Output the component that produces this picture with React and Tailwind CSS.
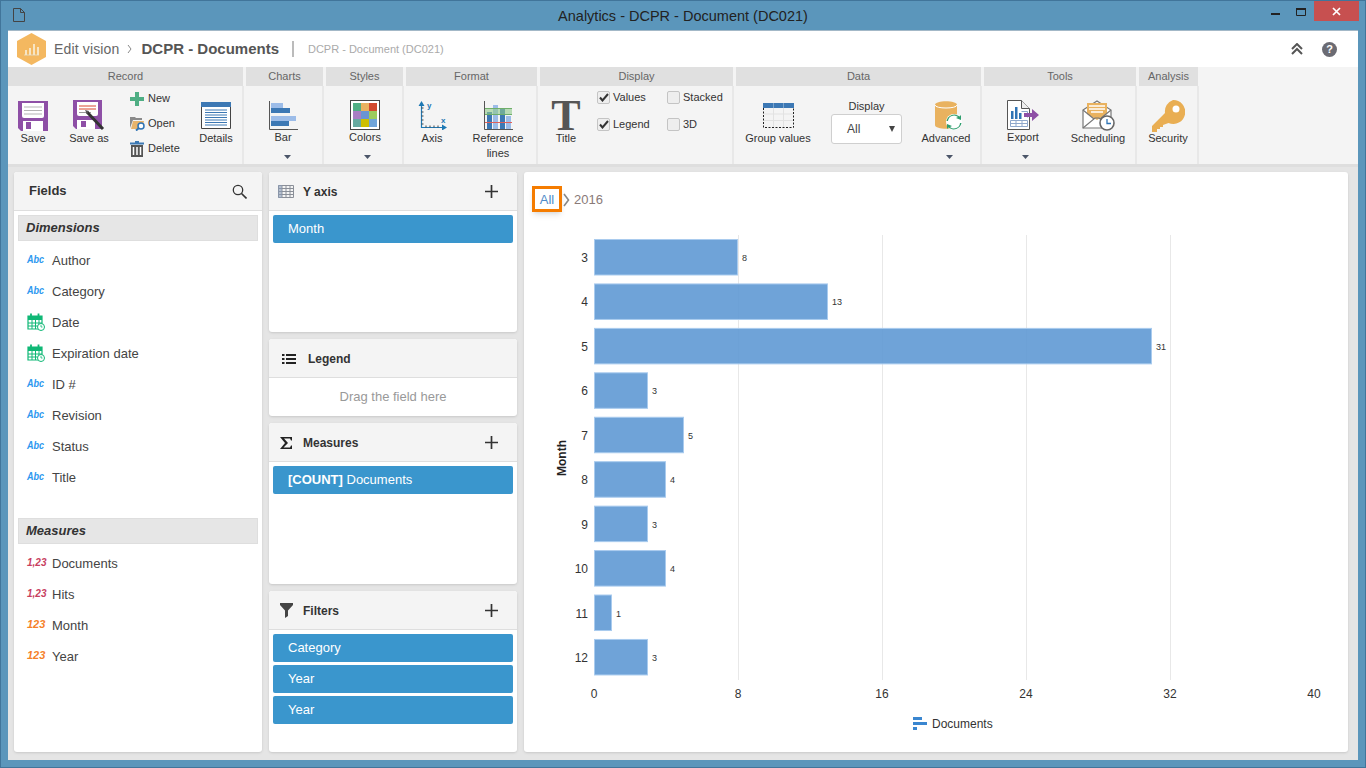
const font = { fontFamily: '"Liberation Sans", Arial, sans-serif' }

const Caret = ({ shift }) => (
    <svg width="7" height="4" viewBox="0 0 7 4" className={`mt-auto mb-[5px] shrink-0 ${shift}`}><path d="M0 0h7L3.5 4z" fill="#4b5568" /></svg>
)

// 리본 버튼
const Tool = ({ w, label, caret, up, children }) => (
    <div className={`${w} h-full flex flex-col items-center shrink-0`}>
        <div className={`${up ? 'h-[30px]' : 'h-[31px]'} mt-[14px] flex items-center justify-center shrink-0`}>{children}</div>
        <div className="text-[11px] leading-[15px] text-center text-[#333] whitespace-pre-line">{label}</div>
        {caret && <Caret shift={caret} />}
    </div>
)

const Group = ({ w, title, children }) => (
    <div className={`${w} flex flex-col shrink-0`}>
        <div className="h-[19px] mr-[3px] bg-[#e0e0e0] text-[11px] leading-[19px] text-center text-[#666]">{title}</div>
        <div className="h-[78px] mr-[2px] border-r-[2px] border-[#e8e8e8] flex">{children}</div>
    </div>
)

const SaveIcon = () => (
    <svg width="30" height="30" viewBox="0 0 30 30">
        <path d="M0 0h30v30H3l-3-3z" fill="#8e4fa6" />
        <path d="M4 2h22v13a2 2 0 0 1-2 2H6a2 2 0 0 1-2-2z" fill="#fff" />
        <path d="M6 6h18M6 9.5h18M6 13h18" stroke="#b5b5b5" />
        <path d="M5 20h20v10H5z" fill="#fff" />
        <path d="M8 21h5v7H8z" fill="#8e4fa6" />
    </svg>
)

const SaveAsIcon = () => (
    <svg width="32" height="31" viewBox="0 0 32 31">
        <path d="M0 0h29v29H3l-3-3z" fill="#8e4fa6" />
        <path d="M4 2h21v12a2 2 0 0 1-2 2H6a2 2 0 0 1-2-2z" fill="#fff" />
        <path d="M6 6h17M6 9h17" stroke="#d9472f" />
        <path d="M6 12.500h12" stroke="#999" />
        <path d="M4 20h18v9H4z" fill="#fff" />
        <path d="M8 21h5v6H8z" fill="#8e4fa6" />
        <path d="M14 12l16 17" stroke="#333" strokeWidth="3" />
        <path d="M12 10l4 1-2 3z" fill="#555" />
    </svg>
)

const NewIcon = () => (
    <svg width="14" height="14" viewBox="0 0 14 14"><path d="M5 0h4v5h5v4H9v5H5V9H0V5h5z" fill="#4fae84" /></svg>
)

const OpenIcon = () => (
    <svg width="16" height="15" viewBox="0 0 16 15">
        <path d="M0 1h5l1 1h6v2H3l-3 8z" fill="#8a8a8a" />
        <path d="M1 13l2-8h11l-2 8z" fill="#e8b46c" />
        <circle cx="11" cy="10" r="3" fill="#fff" stroke="#2f74b5" strokeWidth="1.500" />
        <path d="M9 12l-3 2.500" stroke="#2f74b5" strokeWidth="2" />
    </svg>
)

const DeleteIcon = () => (
    <svg width="14" height="16" viewBox="0 0 14 16">
        <path d="M0 1.500h14v2H0z" fill="#3c79b4" />
        <path d="M5 0h4v2H5z" fill="#3c79b4" />
        <path d="M1 4h12v12H1z" fill="#555" />
        <path d="M3.500 6v8M7 6v8M10.500 6v8" stroke="#fff" strokeWidth="1.500" />
    </svg>
)

const DetailsIcon = () => (
    <svg width="30" height="27" viewBox="0 0 30 27">
        <path d="M.5.500h29v26H.5z" fill="#fff" stroke="#444" />
        <path d="M0 0h30v5H0z" fill="#3c78b4" />
        <path d="M4 8h22M4 10.500h22M4 13h22M4 15.500h22M4 18h22M4 20.500h22M4 23h22" stroke="#3c78b4" />
    </svg>
)

const BarIcon = () => (
    <svg width="29" height="29" viewBox="0 0 29 29">
        <path d="M.5 0v28.500H29" fill="none" stroke="#555" />
        <path d="M2 2h12v5H2z" fill="#9cbce8" />
        <path d="M2 7h19v5H2z" fill="#3c78b4" />
        <path d="M2 15h25v5H2z" fill="#9cbce8" />
        <path d="M2 20h18v5H2z" fill="#3c78b4" />
    </svg>
)

const ColorsIcon = () => {
    const cells = ['#4fae84', '#e9b25f', '#d2492f', '#a77fc4', '#6a94d4', '#9ccb5e', '#66aaa0', '#cdbf00', '#6fa4d9']
    return (
        <div className="w-[30px] h-[30px] border border-[#444] bg-white p-[2px] grid grid-cols-3">
            {cells.map((c, i) => <div key={i} style={{ backgroundColor: c }} />)}
        </div>
    )
}

const AxisIcon = () => (
    <svg width="29" height="29" viewBox="0 0 29 29">
        <path d="M3.500 3v23.500H27" fill="none" stroke="#1e78b4" strokeWidth="1.200" />
        <path d="M3.500 0l3 5h-6zM29 26.500l-5-3v6z" fill="#1e78b4" />
        <path d="M3.500 7h2M3.500 11h2M3.500 15h2M3.500 19h2M3.500 23h2M8 24.500v2M12 24.500v2M16 24.500v2M20 24.500v2" stroke="#444" />
        <text x="9" y="7" fontSize="8" fontWeight="700" fill="#1e78b4">y</text>
        <text x="23" y="22" fontSize="8" fontWeight="700" fill="#1e78b4">x</text>
    </svg>
)

const RefIcon = () => (
    <svg width="29" height="29" viewBox="0 0 29 29">
        <path d="M.5 0v28.500H29" fill="none" stroke="#555" />
        <path d="M3 11h5v17H3zM16 8h5v20h-5z" fill="#3c78b4" />
        <path d="M9 4h5v24H9zM22 15h5v13h-5z" fill="#9cbce8" />
        <path d="M1 7h27v7H1z" fill="#8fc98a" fillOpacity=".6" />
        <path d="M1 7.500h27M1 13.500h27" stroke="#6fae6a" />
        <path d="M1 21.500h27" stroke="#e0605a" />
    </svg>
)

const GroupIcon = () => (
    <svg width="31" height="25" viewBox="0 0 31 25">
        <path d="M10.500 5v19M20.500 5v19M1 11h29M1 17.500h29" stroke="#e2e2e2" />
        <path d="M.5 5v19.500h30V5" fill="none" stroke="#222" strokeDasharray="2 1.500" />
        <path d="M0 0h31v5H0z" fill="#3c78b4" />
        <path d="M10.500 0v5M20.500 0v5" stroke="#7aa3cc" />
    </svg>
)

const AdvancedIcon = () => (
    <svg width="28" height="29" viewBox="0 0 28 29" className="ml-[5px]">
        <path d="M0 4c0-5 22-5 22 0v20c0 5-22 5-22 0z" fill="#e9b25f" />
        <path d="M0 4c0 4 22 4 22 0" fill="none" stroke="#fff" />
        <circle cx="19" cy="21" r="8" fill="#fff" />
        <path d="M13 20a6 6 0 0 1 10-4l-2 1 5 2v-5l-1.500 1.500A8 8 0 0 0 11.500 20zM25 22a6 6 0 0 1-10 4l2-1-5-2v5l1.500-1.500A8 8 0 0 0 26.500 22z" fill="#2e9e6e" />
    </svg>
)

const ExportIcon = () => (
    <svg width="32" height="30" viewBox="0 0 32 30">
        <path d="M.5.500h14l8 8v21H.5z" fill="#fff" stroke="#555" />
        <path d="M14.500.500v8h8" fill="#eee" stroke="#555" />
        <path d="M4 11h2.500v8H4zM8 7h2.500v12H8zM12 13h2.500v6H12z" fill="#2f74b5" />
        <path d="M3.500 20.500h17v6h-17zM3.500 23.500h17M9 20.500v6M15 20.500v6M14.500 11.500h6v6" fill="none" stroke="#8fa8cc" />
        <path d="M17 13h8V9l7 6-7 6v-4h-8z" fill="#8e4fa6" />
    </svg>
)

const ScheduleIcon = () => (
    <svg width="33" height="31" viewBox="0 0 33 31">
        <path d="M1 10L15 1l14 9v18H1z" fill="#fff" stroke="#777" strokeWidth="1.200" />
        <path d="M5 3h20v11l-10 6-10-6z" fill="#e9b25f" />
        <path d="M7 6h16M7 9h16M9 12h12" stroke="#fff" strokeWidth="1.300" />
        <path d="M1 10l11 9M29 10L18 19M1 28l12-10h4l12 10" fill="none" stroke="#777" strokeWidth="1.200" />
        <circle cx="25" cy="23" r="7" fill="#fff" stroke="#666" strokeWidth="1.600" />
        <path d="M25 19v4.500h4" fill="none" stroke="#2f74b5" strokeWidth="1.300" />
    </svg>
)

const KeyIcon = () => (
    <svg width="33" height="32" viewBox="0 0 33 32">
        <path d="M21 0a12 12 0 1 1-4.500 23L11 25v2H8v2H5v3H0v-6L13 13a12 12 0 0 1 8-13z" fill="#e9ae53" />
        <circle cx="24" cy="9" r="3.500" fill="#fff" />
    </svg>
)

const Check = ({ label, on, w }) => (
    <div className={`${w} flex items-center h-[13px]`}>
        <div className="w-[13px] h-[13px] rounded-[2px] border border-[#c4c4c4] bg-[#eeeeee] flex items-center justify-center shrink-0">
            {on && <svg width="10" height="9" viewBox="0 0 10 9"><path d="M1 4.500l2.500 3L9 1" fill="none" stroke="#333" strokeWidth="2" /></svg>}
        </div>
        <span className="ml-[3px] text-[11px] text-[#333]">{label}</span>
    </div>
)

const SmallAction = ({ icon, label }) => (
    <div className="flex items-center h-[25px]">
        <div className="w-[18px] flex justify-start">{icon}</div>
        <span className="text-[11px] text-[#333]">{label}</span>
    </div>
)

const Plus = () => (
    <svg width="13" height="13" viewBox="0 0 13 13" className="ml-auto mr-[19px]"><path d="M6.500 0v13M0 6.500h13" stroke="#333" strokeWidth="1.700" /></svg>
)

const TableIcon = () => (
    <svg width="16" height="13" viewBox="0 0 16 13">
        <path d="M.5.500h15v12H.5zM.5 3.500h15M.5 6.500h15M.5 9.500h15M4 .500v12M8 .500v12M12 .500v12" fill="none" stroke="#8a8f98" />
        <path d="M0 0h4v13H0z" fill="#8a9bb4" fillOpacity=".6" />
    </svg>
)

const ListIcon = () => (
    <svg width="14" height="10" viewBox="0 0 14 10"><path d="M0 1h2.500M4 1h10M0 5h2.500M4 5h10M0 9h2.500M4 9h10" stroke="#222" strokeWidth="1.800" /></svg>
)

const SigmaIcon = () => (
    <svg width="13" height="12" viewBox="0 0 13 12"><path d="M0 0h12v3.500h-1L10 1.500H4L8 6l-4.500 4.500H10l1-2h1V12H0l5-6z" fill="#222" /></svg>
)

const FunnelIcon = () => (
    <svg width="13" height="15" viewBox="0 0 13 15"><path d="M0 0h13v2L8 7.500V13l-3 2V7.500L0 2z" fill="#444" /></svg>
)

const PanelHead = ({ icon, title, plus, textW }) => (
    <div className="h-[39px] pt-[1px] bg-[#f4f4f4] border-b border-[#dedede] flex items-center rounded-t-[3px] shrink-0">
        <div className={`${textW} flex justify-center items-center shrink-0`}>{icon}</div>
        <span className="text-[12px] font-bold text-[#333]">{title}</span>
        {plus && <Plus />}
    </div>
)

const Chip = ({ children }) => (
    <div className="h-[28px] rounded-[2px] bg-[#3a96cd] pl-[15px] text-[13px] leading-[27px] text-white">{children}</div>
)

const TypeTag = ({ type }) => {
    if (type === 'date') {
        return (
            <svg width="18" height="18" viewBox="0 0 18 18">
                <path d="M1 3h14v13H1z" fill="#fff" stroke="#10b876" strokeWidth="1.200" />
                <path d="M1 3h14v4H1z" fill="#10b876" />
                <path d="M4 0.500v4M11.500 0.500v4" stroke="#10b876" strokeWidth="1.800" />
                <path d="M1 10h14M1 13h14M5 7v9M8.500 7v9M12 7v9" stroke="#10b876" />
                <circle cx="14" cy="14" r="3.500" fill="#fff" stroke="#10b876" />
                <path d="M14 12v2h1.500" fill="none" stroke="#10b876" strokeWidth=".8" />
            </svg>
        )
    }
    if (type === 'abc') return <span className="text-[10px] font-bold italic text-[#2b97ef] inline-block origin-left scale-x-90">Abc</span>
    if (type === 'num') return <span className="text-[10px] font-bold italic text-[#c8405f]">1,23</span>
    return <span className="text-[11px] font-bold italic text-[#f5812a]">123</span>
}

const FieldRow = ({ type, label }) => (
    <div className="h-[31px] flex items-center pl-[13px]">
        <div className="w-[25px] flex items-center shrink-0 -mt-[2px]"><TypeTag type={type} /></div>
        <span className="text-[13px] text-[#444]">{label}</span>
    </div>
)

const SectionHead = ({ children }) => (
    <div className="mx-[4px] h-[26px] bg-[#e6e6e6] border border-[#dedede] pl-[7px] text-[13px] leading-[23px] font-bold italic text-[#333]">{children}</div>
)

const dimensions = [
    { type: 'abc', label: 'Author' },
    { type: 'abc', label: 'Category' },
    { type: 'date', label: 'Date' },
    { type: 'date', label: 'Expiration date' },
    { type: 'abc', label: 'ID #' },
    { type: 'abc', label: 'Revision' },
    { type: 'abc', label: 'Status' },
    { type: 'abc', label: 'Title' },
]

const measures = [
    { type: 'num', label: 'Documents' },
    { type: 'num', label: 'Hits' },
    { type: 'int', label: 'Month' },
    { type: 'int', label: 'Year' },
]

const bars = [
    { m: 3, v: 8 }, { m: 4, v: 13 }, { m: 5, v: 31 }, { m: 6, v: 3 }, { m: 7, v: 5 },
    { m: 8, v: 4 }, { m: 9, v: 3 }, { m: 10, v: 4 }, { m: 11, v: 1 }, { m: 12, v: 3 },
]

// 차트는 화면 좌표 그대로 viewBox 사용
const Chart = () => (
    <svg width="824" height="526" viewBox="524 226 824 526" fontFamily='"Liberation Sans", Arial, sans-serif'>
        {[8, 16, 24, 32].map(t => (
            <line key={t} x1={594 + t * 18 + .5} x2={594 + t * 18 + .5} y1="235" y2="680" stroke="#e8e8e8" />
        ))}
        {bars.map((b, i) => {
            const y = 239 + i * 44.44
            return (
                <g key={b.m}>
                    <rect x="594.5" y={y + .5} width={b.v * 18 - 1} height="35.500" fill="#5b96d3" fillOpacity=".88" stroke="#a9cbee" />
                    <text x="588" y={y + 23} textAnchor="end" fontSize="12" fill="#333">{b.m}</text>
                    <text x={594 + b.v * 18 + 4} y={y + 22} fontSize="9" fill="#333">{b.v}</text>
                </g>
            )
        })}
        {[0, 8, 16, 24, 32, 40].map(t => (
            <text key={t} x={594 + t * 18} y="698" textAnchor="middle" fontSize="12" fill="#333">{t}</text>
        ))}
        <text transform="translate(566 458) rotate(-90)" textAnchor="middle" fontSize="12" fontWeight="700" fill="#222">Month</text>
        <path d="M913 717h9v3h-9zM913 722h14v3h-14zM913 727h4v3h-4z" fill="#3a86d0" />
        <text x="932" y="728" fontSize="12" fill="#333">Documents</text>
    </svg>
)

const App = () => {
    return (
        <div style={font} className="w-[1366px] h-[768px] overflow-hidden bg-[#5b96bb] border border-[#41759a] flex flex-col">
            {/* 타이틀바 */}
            <div className="h-[29px] shrink-0 grid grid-cols-[1fr_auto_1fr] items-start">
                <svg width="12" height="14" viewBox="0 0 12 14" className="ml-[12px] mt-[7px]"><path d="M.5.500h7l4 4v9H.5zM7.500.500v4h4" fill="none" stroke="#444" /></svg>
                <div className="text-[14.500px] leading-[30px] text-[#222]">Analytics - DCPR - Document (DC021)</div>
                <div className="flex justify-end items-start">
                    <svg width="9" height="2" viewBox="0 0 9 2" className="mt-[12px]"><path d="M0 0h9v2H0z" fill="#222" /></svg>
                    <svg width="10" height="8" viewBox="0 0 10 8" className="ml-[16px] mt-[7px]"><path d="M.5.500h9v7h-9z" fill="none" stroke="#222" /><path d="M0 0h10v2H0z" fill="#222" /></svg>
                    <div className="ml-[8px] mr-[6px] w-[45px] h-[20px] bg-[#c75050] flex items-center justify-center">
                        <svg width="9" height="9" viewBox="0 0 9 9"><path d="M1 1l7 7M8 1L1 8" stroke="#fff" strokeWidth="1.700" /></svg>
                    </div>
                </div>
            </div>

            <div className="mx-[7px] mb-[7px] flex-1 flex flex-col bg-[#e5e5e5] border-t border-[#41759a]/40 min-h-0">
                {/* 상단 헤더 */}
                <div className="h-[36px] bg-white flex items-center shrink-0">
                    <svg width="29" height="32" viewBox="0 0 29 32" className="ml-[9px]">
                        <path d="M14.500 0L29 8v16l-14.500 8L0 24V8z" fill="#f4b860" />
                        <path d="M7 22h15" stroke="#e0d8c0" />
                        <path d="M8 17h2v5H8zM12 15h2v7h-2zM16 11h2v11h-2zM20 14h2v8h-2z" fill="#f8e5c2" />
                    </svg>
                    <span className="ml-[8px] text-[14px] tracking-[.15px] text-[#666]">Edit vision</span>
                    <svg width="5" height="8" viewBox="0 0 5 8" className="ml-[8px]"><path d="M1 0l3 4-3 4" fill="none" stroke="#888" /></svg>
                    <span className="ml-[9px] text-[15px] font-bold text-[#555]">DCPR - Documents</span>
                    <div className="ml-[13px] w-[2px] h-[16px] bg-[#bbb]" />
                    <span className="ml-[14px] text-[11px] text-[#aaa]">DCPR - Document (DC021)</span>
                    <svg width="12" height="12" viewBox="0 0 12 12" className="ml-auto"><path d="M1 6l5-5 5 5M1 11l5-5 5 5" fill="none" stroke="#555" strokeWidth="2" /></svg>
                    <div className="ml-[19px] mr-[21px] w-[15px] h-[15px] rounded-full bg-[#6b6b73] text-white text-[11px] leading-[15px] font-bold text-center">?</div>
                </div>

                {/* 리본 */}
                <div className="h-[100px] shrink-0 bg-[#f4f4f4] border-b-[3px] border-[#dedede] flex">
                    <Group w="w-[238px]" title="Record">
                        <Tool w="w-[50px]" label="Save"><SaveIcon /></Tool>
                        <Tool w="w-[62px]" label="Save as"><SaveAsIcon /></Tool>
                        <div className="w-[70px] pl-[10px] shrink-0">
                            <SmallAction icon={<NewIcon />} label="New" />
                            <SmallAction icon={<OpenIcon />} label="Open" />
                            <SmallAction icon={<DeleteIcon />} label="Delete" />
                        </div>
                        <Tool w="w-[52px]" label="Details"><DetailsIcon /></Tool>
                    </Group>
                    <Group w="w-[80px]" title="Charts">
                        <Tool w="w-[74px]" label="Bar" caret="ml-[8px]" up><BarIcon /></Tool>
                    </Group>
                    <Group w="w-[80px]" title="Styles">
                        <Tool w="w-[78px]" label="Colors" caret="ml-[4px]" up><ColorsIcon /></Tool>
                    </Group>
                    <Group w="w-[134px]" title="Format">
                        <Tool w="w-[52px]" label="Axis"><AxisIcon /></Tool>
                        <Tool w="w-[80px]" label={'Reference\nlines'}><RefIcon /></Tool>
                    </Group>
                    <Group w="w-[196px]" title="Display">
                        <div className="w-[52px] h-full flex flex-col items-center shrink-0">
                            <div className="h-[31px] mt-[14px] text-[44px] leading-[31px] font-bold text-[#555] shrink-0" style={{ fontFamily: '"Liberation Serif", serif' }}>T</div>
                            <div className="text-[11px] leading-[15px] text-[#333]">Title</div>
                        </div>
                        <div className="ml-[5px] pt-[5px] flex flex-col gap-[14px]">
                            <div className="flex">
                                <Check w="w-[70px]" label="Values" on />
                                <Check label="Stacked" />
                            </div>
                            <div className="flex">
                                <Check w="w-[70px]" label="Legend" on />
                                <Check label="3D" />
                            </div>
                        </div>
                    </Group>
                    <Group w="w-[248px]" title="Data">
                        <Tool w="w-[84px]" label="Group values"><GroupIcon /></Tool>
                        <div className="ml-[11px] w-[71px] shrink-0 pt-[13px]">
                            <div className="text-[11px] leading-[14px] text-center text-[#333]">Display</div>
                            <div className="mt-[1px] h-[30px] border border-[#cfcfcf] rounded-[3px] bg-white flex items-center pl-[15px] pr-[6px]">
                                <span className="text-[12px] text-[#444]">All</span>
                                <svg width="6" height="6" viewBox="0 0 6 6" className="ml-auto"><path d="M0 0h6L3 6z" fill="#444" /></svg>
                            </div>
                        </div>
                        <div className="ml-[10px]">
                            <Tool w="w-[68px]" label="Advanced" caret="ml-[6px]"><AdvancedIcon /></Tool>
                        </div>
                    </Group>
                    <Group w="w-[155px]" title="Tools">
                        <Tool w="w-[78px]" label="Export" caret="ml-[4px]" up><ExportIcon /></Tool>
                        <Tool w="w-[72px]" label="Scheduling"><ScheduleIcon /></Tool>
                    </Group>
                    <Group w="w-[62px]" title="Analysis">
                        <Tool w="w-[58px]" label="Security"><KeyIcon /></Tool>
                    </Group>
                </div>

                {/* 본문 */}
                <div className="flex-1 min-h-0 flex gap-[7px] pl-[6px] pr-[10px] pt-[5px] pb-[8px]">
                    <div className="w-[248px] bg-white rounded-[3px] shadow-sm flex flex-col shrink-0">
                        <div className="h-[39px] bg-[#f4f4f4] border-b border-[#dedede] flex items-center rounded-t-[3px] shrink-0">
                            <span className="ml-[15px] text-[13px] font-bold text-[#333]">Fields</span>
                            <svg width="15" height="15" viewBox="0 0 15 15" className="ml-auto mr-[15px]"><circle cx="6" cy="6" r="4.700" fill="none" stroke="#333" strokeWidth="1.300" /><path d="M9.500 9.500l5 5" stroke="#333" strokeWidth="1.600" /></svg>
                        </div>
                        <div className="mt-[4px]"><SectionHead>Dimensions</SectionHead></div>
                        <div className="mt-[4px]">
                            {dimensions.map(f => <FieldRow key={f.label} type={f.type} label={f.label} />)}
                        </div>
                        <div className="mt-[25px]"><SectionHead>Measures</SectionHead></div>
                        <div className="mt-[4px]">
                            {measures.map(f => <FieldRow key={f.label} type={f.type} label={f.label} />)}
                        </div>
                    </div>

                    <div className="w-[248px] flex flex-col gap-[7px] shrink-0">
                        <div className="h-[160px] bg-white rounded-[3px] shadow-sm">
                            <PanelHead icon={<TableIcon />} title="Y axis" plus textW="w-[34px]" />
                            <div className="px-[4px] pt-[4px]"><Chip>Month</Chip></div>
                        </div>
                        <div className="h-[77px] bg-white rounded-[3px] shadow-sm">
                            <PanelHead icon={<ListIcon />} title="Legend" textW="w-[39px]" />
                            <div className="h-[37px] text-center text-[13px] leading-[37px] text-[#999]">Drag the field here</div>
                        </div>
                        <div className="h-[161px] bg-white rounded-[3px] shadow-sm">
                            <PanelHead icon={<SigmaIcon />} title="Measures" plus textW="w-[34px]" />
                            <div className="px-[4px] pt-[4px]"><Chip><b>[COUNT]</b> Documents</Chip></div>
                        </div>
                        <div className="h-[161px] bg-white rounded-[3px] shadow-sm">
                            <PanelHead icon={<FunnelIcon />} title="Filters" plus textW="w-[34px]" />
                            <div className="px-[4px] pt-[4px] flex flex-col gap-[3px]">
                                <Chip>Category</Chip>
                                <Chip>Year</Chip>
                                <Chip>Year</Chip>
                            </div>
                        </div>
                    </div>

                    <div className="flex-1 bg-white rounded-[3px] shadow-sm flex flex-col min-w-0">
                        <div className="h-[54px] shrink-0 pl-[8px] pt-[14px] flex items-start">
                            <div className="w-[30px] h-[26px] border-[3px] border-[#f57c00] shadow-md text-center text-[13px] leading-[21px] text-[#4f8bc9]">All</div>
                            <svg width="7" height="14" viewBox="0 0 7 14" className="ml-[1px] mt-[7px]"><path d="M1 1l4.500 6L1 13" fill="none" stroke="#888" strokeWidth="1.600" /></svg>
                            <span className="ml-[4px] mt-[6px] text-[13px] leading-[16px] text-[#8a7a78]">2016</span>
                        </div>
                        <Chart />
                    </div>
                </div>
            </div>
        </div>
    )
}

export default App
